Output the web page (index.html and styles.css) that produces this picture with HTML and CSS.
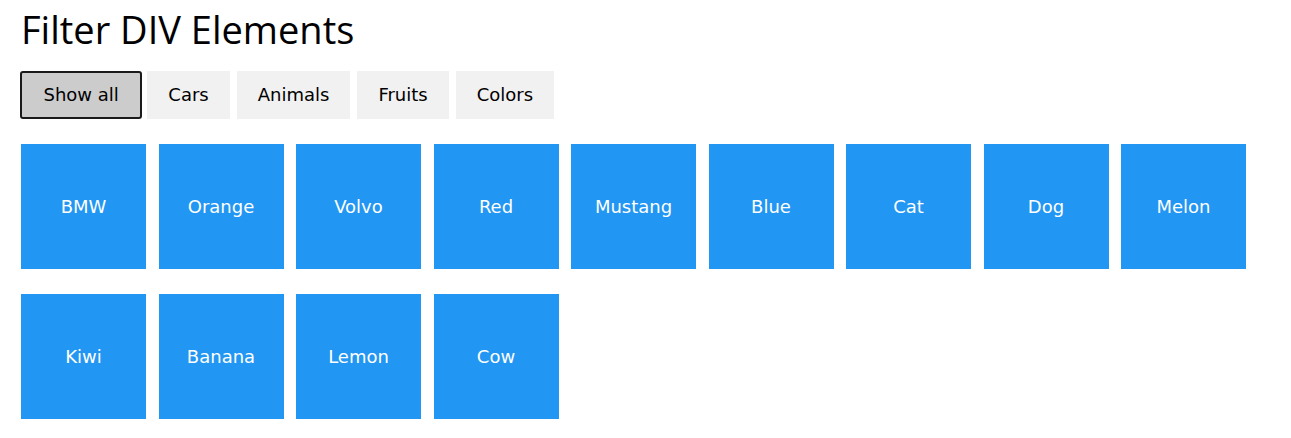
FILE: index.html
```html
<!DOCTYPE html>
<html>
<head>
<meta charset="utf-8">
<link rel="stylesheet" href="styles.css">
</head>
<body>
<h2 class="title">Filter DIV Elements</h2>
<div class="btn-bar">
  <button class="btn active">Show all</button>
  <button class="btn">Cars</button>
  <button class="btn">Animals</button>
  <button class="btn">Fruits</button>
  <button class="btn">Colors</button>
</div>
<div class="grid">
  <div class="item">BMW</div>
  <div class="item">Orange</div>
  <div class="item">Volvo</div>
  <div class="item">Red</div>
  <div class="item">Mustang</div>
  <div class="item">Blue</div>
  <div class="item">Cat</div>
  <div class="item">Dog</div>
  <div class="item">Melon</div>
  <div class="item">Kiwi</div>
  <div class="item">Banana</div>
  <div class="item">Lemon</div>
  <div class="item">Cow</div>
</div>
</body>
</html>
```
FILE: styles.css
```css
html, body {
  margin: 0;
  padding: 0;
  background: #fff;
}
body {
  padding: 3px 21px 0;
  font-family: "DejaVu Sans", Verdana, sans-serif;
  color: #000;
}
.title {
  margin: 0;
  font-family: "Open Sans", "Noto Sans", sans-serif;
  font-size: 38px;
  font-weight: 400;
  line-height: 52px;
}
.btn-bar {
  display: flex;
  gap: 7px;
  margin-top: 16px;
  margin-left: -1px;
}
.btn {
  border: none;
  outline: none;
  padding: 12px 21px;
  background: #f1f1f1;
  font-family: "DejaVu Sans", Verdana, sans-serif;
  font-size: 18px;
  line-height: 24px;
  color: #000;
}
.btn.active {
  background: #ccc;
  border: 2px solid #1a1a1a;
  border-radius: 3px;
  padding: 10px 21.5px;
  margin-right: -2px;
}
.grid {
  display: flex;
  flex-wrap: wrap;
  column-gap: 12.5px;
  row-gap: 25px;
  margin-top: 25px;
}
.item {
  width: 125px;
  height: 125px;
  background: #2196F3;
  color: #fff;
  font-size: 18px;
  display: flex;
  align-items: center;
  justify-content: center;
}
```
